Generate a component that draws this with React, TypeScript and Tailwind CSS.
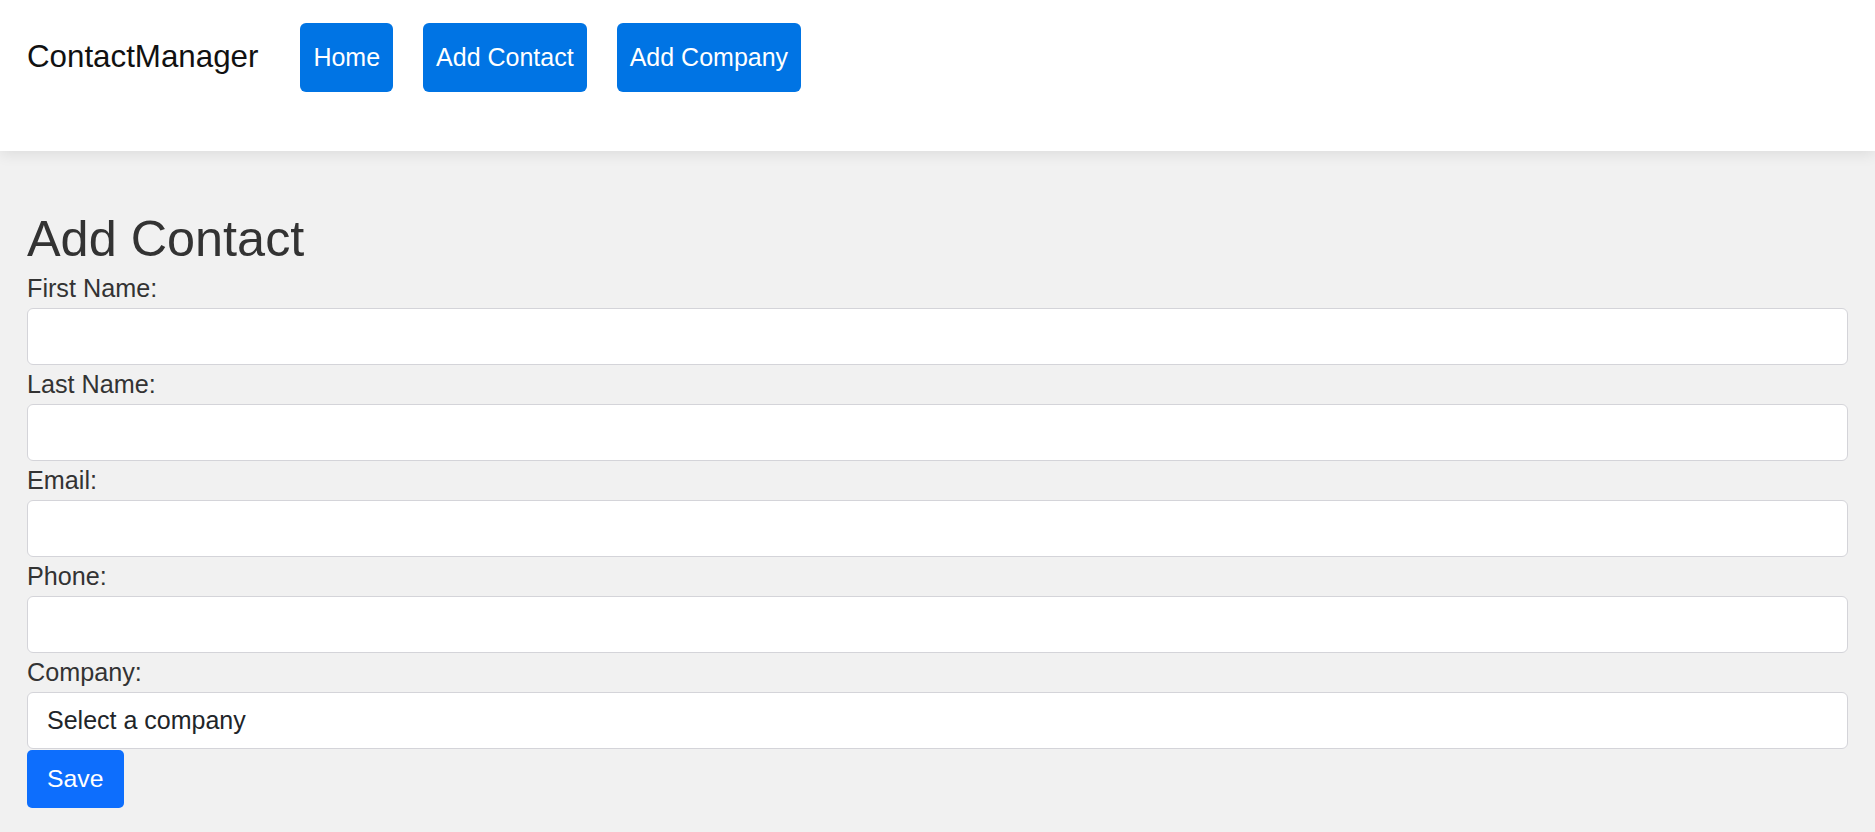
import { useState } from 'react'

const fields = [
  { key: 'firstName', label: 'First Name:', type: 'text' },
  { key: 'lastName', label: 'Last Name:', type: 'text' },
  { key: 'email', label: 'Email:', type: 'email' },
  { key: 'phone', label: 'Phone:', type: 'tel' },
]

export default function App() {
  const [form, setForm] = useState<Record<string, string>>({
    firstName: '',
    lastName: '',
    email: '',
    phone: '',
    company: '',
  })

  return (
    <div
      className="min-h-screen bg-[#f1f1f1] text-[#333]"
      style={{ fontFamily: '"Liberation Sans", Arial, sans-serif' }}
    >
      <header className="h-[151px] bg-white px-[27px] pt-[23px] shadow-[0_3px_14px_rgba(0,0,0,0.09)]">
        <nav className="flex h-[69px] items-center">
          <span className="mr-[42px] text-[31.3px] text-[#111]">ContactManager</span>
          <div className="flex gap-[30px]">
            {['Home', 'Add Contact', 'Add Company'].map((item) => (
              <a
                key={item}
                href="#"
                className="flex h-[69px] items-center rounded-[6px] bg-[#0074e4] px-[13px] text-[25px] text-white"
              >
                {item}
              </a>
            ))}
          </div>
        </nav>
      </header>

      <main className="px-[27px] pt-[58px]">
        <h1 className="m-0 text-[50.4px] font-normal leading-[60px] text-[#333]">Add Contact</h1>
        <form onSubmit={(e) => e.preventDefault()}>
          {fields.map((f) => (
            <div key={f.key}>
              <label className="block text-[25.2px] leading-[39px] text-[#333]">{f.label}</label>
              <input
                type={f.type}
                value={form[f.key]}
                onChange={(e) => setForm({ ...form, [f.key]: e.target.value })}
                className="block h-[57px] w-full rounded-[6px] border-[1.5px] border-[#d4d4d9] bg-white px-[19px] text-[25px] outline-none"
              />
            </div>
          ))}
          <div>
            <label className="block text-[25.2px] leading-[39px] text-[#333]">Company:</label>
            <select
              value={form.company}
              onChange={(e) => setForm({ ...form, company: e.target.value })}
              className="block h-[57px] w-full appearance-none rounded-[6px] border-[1.5px] border-[#d4d4d9] bg-white px-[19px] text-[25px] text-[#212529] outline-none"
            >
              <option value="">Select a company</option>
            </select>
          </div>
          <button
            type="submit"
            className="mt-[1px] h-[58px] rounded-[5px] bg-[#0d6efd] px-[20px] text-[24.8px] text-white"
          >
            Save
          </button>
        </form>
      </main>
    </div>
  )
}
